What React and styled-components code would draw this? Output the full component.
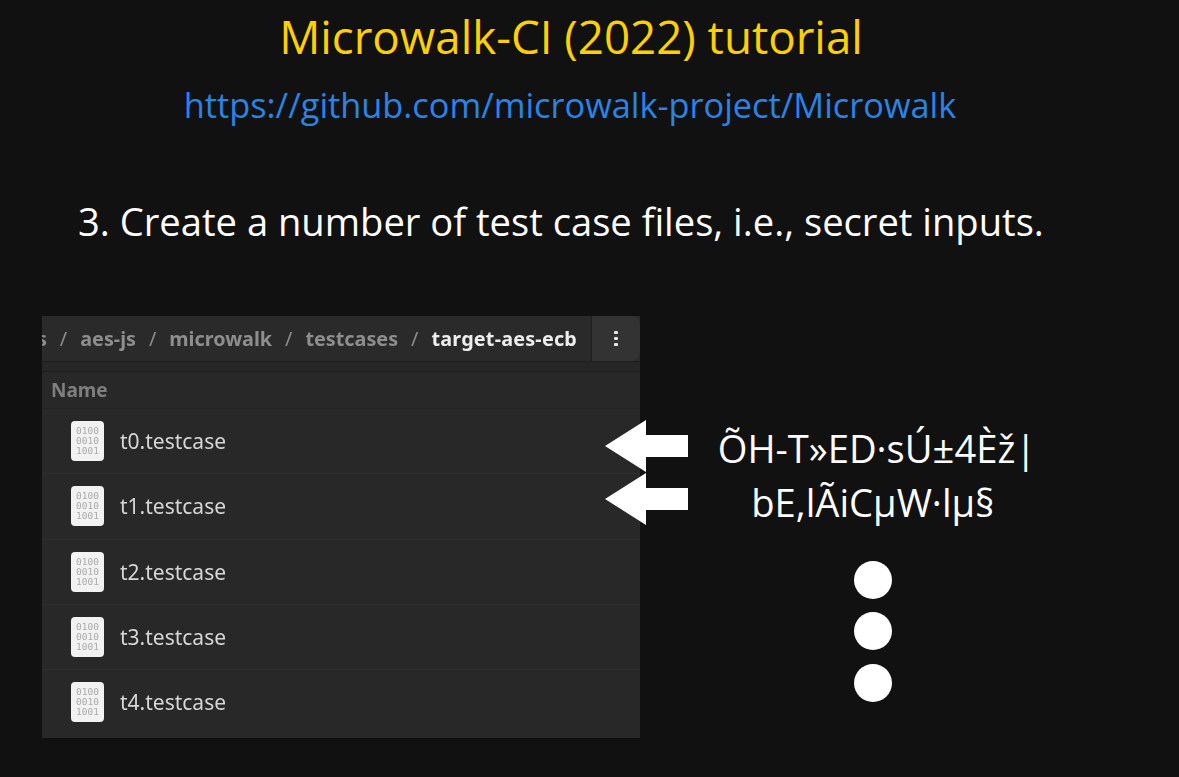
import styled, { createGlobalStyle } from "styled-components"

const GlobalStyle = createGlobalStyle`
    html, body {
        margin: 0;
        padding: 0;
        background-color: #111111;
    }
`

const files = ["t0.testcase", "t1.testcase", "t2.testcase", "t3.testcase", "t4.testcase"]
const crumbs = ["tests", "aes-js", "microwalk", "testcases"]

function BinaryFileIcon() {
    return (
        <FileIcon>
            <span>0100</span>
            <span>0010</span>
            <span>1001</span>
        </FileIcon>
    )
}

function Arrow() {
    return (
        <svg width="84" height="52" viewBox="0 0 84 52">
            <polygon points="0,26 41,0 41,15 83,15 83,37 41,37 41,52" fill="#fff" />
        </svg>
    )
}

export default function App() {
    return (
        <Slide>
            <GlobalStyle />
            <Title>Microwalk-CI (2022) tutorial</Title>
            <RepoLink>https://github.com/microwalk-project/Microwalk</RepoLink>
            <Step>3. Create a number of test case files, i.e., secret inputs.</Step>

            <Content>
                <FilePanel>
                    <PathBar>
                        <Breadcrumbs>
                            {crumbs.map((crumb) => (
                                <Crumb key={crumb}>
                                    {crumb}
                                    <Slash>/</Slash>
                                </Crumb>
                            ))}
                            <CurrentCrumb>target-aes-ecb</CurrentCrumb>
                        </Breadcrumbs>
                        <MenuButton>
                            <i />
                            <i />
                            <i />
                        </MenuButton>
                    </PathBar>
                    <BarGap />
                    <ColumnHeader>Name</ColumnHeader>
                    {files.map((file) => (
                        <FileRow key={file}>
                            <BinaryFileIcon />
                            <FileName>{file}</FileName>
                        </FileRow>
                    ))}
                </FilePanel>

                <Arrows>
                    <Arrow />
                    <Arrow />
                </Arrows>

                <SecretColumn>
                    <SecretText>
                        <FirstLine>ÕH-T»ED·sÚ±4Èž|</FirstLine>
                        <br />
                        bE,lÃiCµW·lµ§
                    </SecretText>
                    <Dots>
                        <Dot />
                        <Dot />
                        <Dot />
                    </Dots>
                </SecretColumn>
            </Content>
        </Slide>
    )
}

const Slide = styled.div`
    width: 1179px;
    height: 777px;
    overflow: hidden;
    background-color: #111111;
    font-family: "Open Sans", sans-serif;
    display: flex;
    flex-direction: column;
`

const Title = styled.h1`
    margin: 8px 0 0 0;
    width: 1142px;
    text-align: center;
    font-size: 45.7px;
    line-height: 56px;
    font-weight: 400;
    color: #ffd000;
`

const RepoLink = styled.div`
    margin-top: 19px;
    width: 1140px;
    text-align: center;
    font-size: 34.3px;
    line-height: 44px;
    color: #2a84e8;
`

const Step = styled.div`
    margin: 70px 0 0 78px;
    font-size: 38.15px;
    line-height: 48px;
    color: #ffffff;
`

const Content = styled.div`
    position: relative;
    display: flex;
    margin: 71px 0 0 42px;
`

const FilePanel = styled.div`
    width: 598px;
    height: 422px;
    flex-shrink: 0;
    display: flex;
    flex-direction: column;
    background-color: #282828;
    font-family: "Noto Sans", sans-serif;
    filter: blur(0.35px);
`

const PathBar = styled.div`
    height: 45px;
    flex-shrink: 0;
    display: flex;
    background-color: #2a2a2a;
    border-bottom: 1px solid #1d1d1d;
`

const Breadcrumbs = styled.div`
    flex: 1;
    min-width: 0;
    display: flex;
    justify-content: flex-end;
    align-items: center;
    overflow: hidden;
    white-space: nowrap;
    padding-right: 14px;
    font-size: 19.8px;
    font-weight: 700;
    color: #8e8e8e;
`

const Crumb = styled.span`
    display: flex;
    align-items: center;
`

const Slash = styled.span`
    margin: 0 13px;
    font-weight: 400;
    color: #8a8a8a;
`

const CurrentCrumb = styled.span`
    letter-spacing: 0.2px;
    color: #eeeeee;
`

const MenuButton = styled.div`
    width: 48px;
    flex-shrink: 0;
    display: flex;
    flex-direction: column;
    align-items: center;
    justify-content: center;
    gap: 2.5px;
    background-color: #333333;
    border-left: 1px solid #1f1f1f;
    border-radius: 0 8px 8px 0;

    i {
        width: 3.5px;
        height: 3.5px;
        background-color: #e6e6e6;
        border-radius: 1px;
    }
`

const BarGap = styled.div`
    height: 9px;
    flex-shrink: 0;
    background-color: #262626;
    border-bottom: 1px solid #1d1d1d;
`

const ColumnHeader = styled.div`
    height: 36px;
    flex-shrink: 0;
    display: flex;
    align-items: center;
    padding-left: 9px;
    font-size: 19px;
    font-weight: 700;
    color: #7f7f7f;
    border-bottom: 1px solid #232323;
`

const FileRow = styled.div`
    height: 64.25px;
    flex-shrink: 0;
    display: flex;
    align-items: center;
    padding-left: 29px;
    gap: 16px;
    border-bottom: 1px solid #2e2e2e;

    &:last-child {
        border-bottom: none;
    }
`

const FileIcon = styled.div`
    width: 33px;
    height: 40px;
    display: flex;
    flex-direction: column;
    align-items: center;
    justify-content: center;
    background-color: #f2f2f2;
    border-radius: 4px;
    font-family: "DejaVu Sans Mono", monospace;
    font-size: 9.5px;
    line-height: 10px;
    color: #ababab;
`

const FileName = styled.span`
    font-size: 21px;
    color: #d6d6d6;
`

const Arrows = styled.div`
    position: absolute;
    left: 563px;
    top: 104px;
    display: flex;
    flex-direction: column;
    gap: 1px;
    line-height: 0;
`

const SecretColumn = styled.div`
    margin: 105px 0 0 0;
    width: 466px;
    display: flex;
    flex-direction: column;
    align-items: center;
`

const SecretText = styled.div`
    font-size: 38.15px;
    line-height: 54px;
    text-align: center;
    color: #ffffff;
    white-space: nowrap;
`

const FirstLine = styled.span`
    padding-left: 8px;
`

const Dots = styled.div`
    display: flex;
    flex-direction: column;
    gap: 13.4px;
    margin-top: 32px;
`

const Dot = styled.div`
    width: 38px;
    height: 38px;
    border-radius: 50%;
    background-color: #ffffff;
`
